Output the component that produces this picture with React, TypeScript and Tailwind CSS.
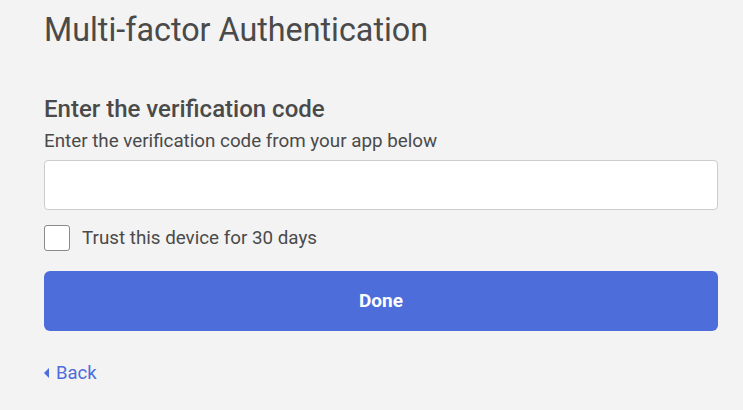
import { useState } from 'react';

export default function App() {
  const [code, setCode] = useState('');
  const [trust, setTrust] = useState(false);

  return (
    <div className="min-h-[410px] w-full bg-[#f3f3f3] font-['Roboto',sans-serif] text-[#4a4a4a]">
      <div className="px-[44px] pr-[25px]">
        <h1 className="pt-[10px] text-[32.3px] leading-[40px] font-normal text-[#4a4a4a]">
          Multi-factor Authentication
        </h1>

        <h2 className="mt-[45px] text-[24px] leading-[28px] font-medium">Enter the verification code</h2>
        <p className="mt-[6px] text-[18.8px] leading-[24px]">Enter the verification code from your app below</p>

        <input
          type="text"
          value={code}
          onChange={(e) => setCode(e.target.value)}
          className="mt-[7px] block h-[50px] w-full rounded-[4px] border border-[#cccccc] bg-white px-3 text-[18px] outline-none"
        />

        <label className="mt-[15px] flex items-center gap-[12px]">
          <span
            onClick={() => setTrust(!trust)}
            className="block h-[26px] w-[26px] rounded-[3px] border border-[#8a8a8a] bg-white"
          />
          <span className="text-[18.8px] leading-[24px]">Trust this device for 30 days</span>
        </label>

        <button
          type="button"
          className="mt-[20px] block h-[60px] w-full rounded-[6px] bg-[#4d6ddb] text-[19px] font-bold text-white"
        >
          Done
        </button>

        <a href="#" className="mt-[31px] flex items-center gap-[7px] text-[18.5px] leading-[22px] text-[#4d6ddb]">
          <svg width="5" height="10" viewBox="0 0 5 10">
            <polygon points="5,0 5,10 0,5" fill="#4d6ddb" />
          </svg>
          Back
        </a>
      </div>
    </div>
  );
}
